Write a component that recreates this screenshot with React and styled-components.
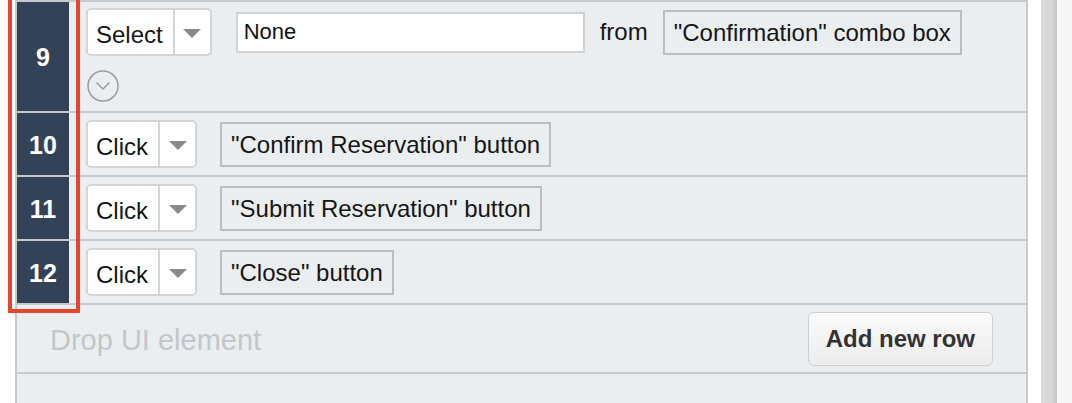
import React from 'react';
import styled, { createGlobalStyle } from 'styled-components';

const Global = createGlobalStyle`
body {
  margin: 0;
  background: #fff;
  font-family: "Liberation Sans", Arial, sans-serif;
}
`

export const Page = styled.div`
display: flex;
height: 403px;
overflow: hidden;
`
export const Panel = styled.div`
position: relative;
box-sizing: border-box;
width: 1013px;
margin-left: 15px;
display: flex;
flex-direction: column;
background: #ebeef0;
border: 2px solid #c6cacd;
border-bottom: none;
`
export const Gutter = styled.div`
width: 13px;
background: #fff;
`
export const Scroll = styled.div`
width: 16px;
background: linear-gradient(to right, #dcdcdc 0%, #d6d6d6 65%, #c4c4c4 100%);
`
export const Aside = styled.div`
flex: 1;
background: #f6f7f9;
`
export const Row = styled.div`
display: grid;
grid-template-columns: 52px 1fr;
border-bottom: 2px solid #c6cacd;
min-height: ${(p) => p.h}px;
`
export const Num = styled.div`
background: #344258;
color: #fff;
font-weight: bold;
font-size: 25px;
display: flex;
align-items: center;
justify-content: center;
padding-top: 2px;
`
export const Cell = styled.div`
display: flex;
flex-direction: column;
justify-content: center;
padding-left: 17px;
`
export const Line = styled.div`
display: flex;
align-items: center;
gap: ${(p) => p.gap || 23}px;
`
export const Dropdown = styled.div`
display: inline-flex;
box-sizing: border-box;
height: 48px;
background: #fff;
border: 2px solid #d4d4d4;
border-radius: 5px;
margin-right: ${(p) => p.mr || 0}px;
`
export const DropText = styled.div`
display: flex;
align-items: center;
padding: 5px 10px 0 8px;
font-size: 24px;
color: #151515;
`
export const DropArrow = styled.div`
width: 35px;
border-left: 2px solid #d4d4d4;
display: flex;
align-items: center;
justify-content: center;
&::after {
  content: '';
  border-left: 9px solid transparent;
  border-right: 9px solid transparent;
  border-top: 9px solid #8a8a8a;
  margin-top: 3px;
}
`
export const Field = styled.input`
box-sizing: border-box;
width: 349px;
height: 41px;
border: 2px solid #d2d2d2;
background: #fff;
padding: 0 6px;
font-family: "Liberation Sans", Arial, sans-serif;
font-size: 22px;
color: #111;
outline: none;
`
export const Word = styled.span`
font-size: 24px;
color: #151515;
`
export const Target = styled.div`
box-sizing: border-box;
height: 45px;
display: flex;
align-items: center;
padding: 1px 9px 0;
border: 2px solid #bdbdbd;
font-size: 24px;
color: #151515;
white-space: nowrap;
`
export const Expand = styled.svg`
display: block;
margin: 14px 0 9px 1px;
`
export const DropRow = styled.div`
display: flex;
align-items: center;
justify-content: space-between;
height: 67px;
padding: 0 33px;
border-bottom: 2px solid #c6cacd;
`
export const DropHint = styled.span`
font-size: 29px;
color: #c3c6ca;
padding-top: 4px;
`
export const AddButton = styled.button`
height: 54px;
padding: 0 17px;
border: 1px solid #cfcfcf;
border-radius: 6px;
background: linear-gradient(#fbfbfb, #ececec);
font-family: "Liberation Sans", Arial, sans-serif;
font-weight: bold;
font-size: 24px;
color: #333;
`
export const Highlight = styled.div`
position: absolute;
left: -9px;
top: -12px;
width: 72px;
height: 323px;
box-sizing: border-box;
border: 4px solid #e8452c;
pointer-events: none;
`

const steps = [
  { n: 10, action: 'Click', target: '"Confirm Reservation" button' },
  { n: 11, action: 'Click', target: '"Submit Reservation" button' },
  { n: 12, action: 'Click', target: '"Close" button' },
];

export default function App() {
  return (
    <>
      <Global />
      <Page>
        <Panel>
          <Row h={109}>
            <Num>9</Num>
            <Cell>
              <Line gap={15} style={{ marginTop: 6 }}>
                <Dropdown mr={9}>
                  <DropText>Select</DropText>
                  <DropArrow />
                </Dropdown>
                <Field value="None" readOnly />
                <Word>from</Word>
                <Target>"Confirmation" combo box</Target>
              </Line>
              <Expand width="32" height="32" viewBox="0 0 32 32">
                <circle cx="16" cy="16" r="15" fill="none" stroke="#9b9b9b" strokeWidth="1.5" />
                <path d="M9.5 12.5 L16 19 L22.5 12.5" fill="none" stroke="#9b9b9b" strokeWidth="1.5" />
              </Expand>
            </Cell>
          </Row>
          {steps.map((s) => (
            <Row h={62} key={s.n}>
              <Num>{s.n}</Num>
              <Cell>
                <Line>
                  <Dropdown>
                    <DropText>{s.action}</DropText>
                    <DropArrow />
                  </Dropdown>
                  <Target>{s.target}</Target>
                </Line>
              </Cell>
            </Row>
          ))}
          <DropRow>
            <DropHint>Drop UI element</DropHint>
            <AddButton>Add new row</AddButton>
          </DropRow>
          <Highlight />
        </Panel>
        <Gutter />
        <Scroll />
        <Aside />
      </Page>
    </>
  );
}
